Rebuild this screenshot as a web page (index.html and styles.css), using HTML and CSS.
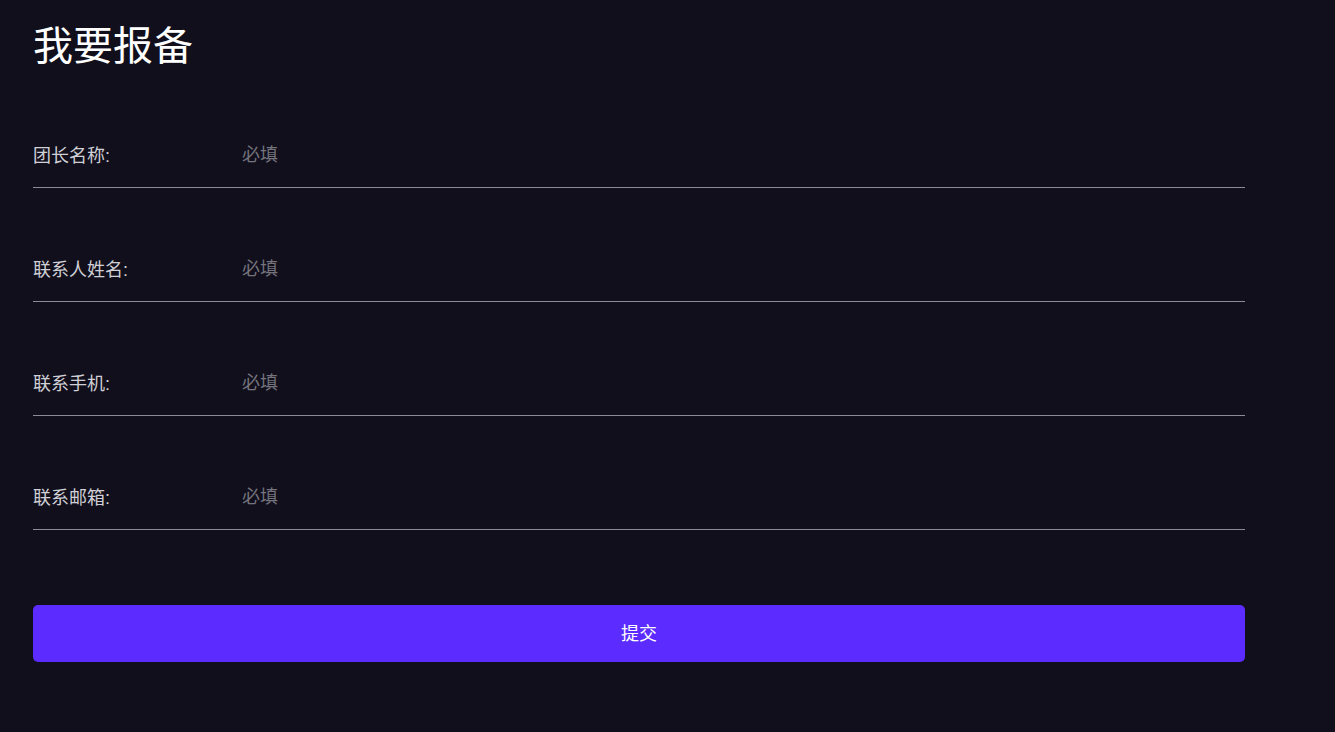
FILE: index.html
```html
<!DOCTYPE html>
<html lang="zh-CN">

<head>
  <meta charset="UTF-8">
  <meta name="viewport" content="width=device-width, initial-scale=1.0">
  <title>我要报备</title>

  <link rel="stylesheet" href="styles.css">
</head>

<body>
  <div class="page">
    <h1 class="title">我要报备</h1>

    <form class="report-form" onsubmit="return false">
      <div class="form-row">
        <label class="form-label" for="input_team">团长名称:</label>
        <input id="input_team" class="form-input" type="text" placeholder="必填" />
      </div>

      <div class="form-row">
        <label class="form-label" for="input_contact">联系人姓名:</label>
        <input id="input_contact" class="form-input" type="text" placeholder="必填" />
      </div>

      <div class="form-row">
        <label class="form-label" for="input_phone">联系手机:</label>
        <input id="input_phone" class="form-input" type="tel" placeholder="必填" />
      </div>

      <div class="form-row">
        <label class="form-label" for="input_email">联系邮箱:</label>
        <input id="input_email" class="form-input" type="email" placeholder="必填" />
      </div>

      <button class="btn-submit" type="submit">提交</button>
    </form>
  </div>
</body>

</html>
```

FILE: styles.css
```css
html,
body {
  margin: 0;
  background-color: #110f1c;
}

body {
  font-family: "Liberation Sans", "Noto Sans CJK SC", sans-serif;
  color: #fff;
}

.page {
  width: 1212px;
  padding: 18px 33px 40px;
}

.title {
  margin: 0;
  font-size: 40px;
  font-weight: 400;
  line-height: 56px;
}

.report-form {
  display: flex;
  flex-direction: column;
  gap: 53px;
  margin-top: 53px;
}

.form-row {
  display: flex;
  height: 61px;
}

.form-label {
  flex: 0 0 209px;
  height: 60px;
  line-height: 58px;
  font-size: 18px;
  color: #d0d0d6;
  border-bottom: 1px solid #8c8b95;
}

.form-input {
  flex: 1;
  height: 61px;
  box-sizing: border-box;
  margin: 0;
  padding: 0 0 4px;
  background: transparent;
  border: none;
  border-bottom: 1px solid #8c8b95;
  outline: none;
  font-family: inherit;
  font-size: 18px;
  color: #fff;
}

.form-input::placeholder {
  color: #75747d;
}

.btn-submit {
  margin-top: 22px;
  height: 57px;
  padding: 0 0 3px;
  border: none;
  border-radius: 5px;
  background-color: #5b2bff;
  font-family: inherit;
  font-size: 18px;
  color: #fff;
  cursor: pointer;
}
```
